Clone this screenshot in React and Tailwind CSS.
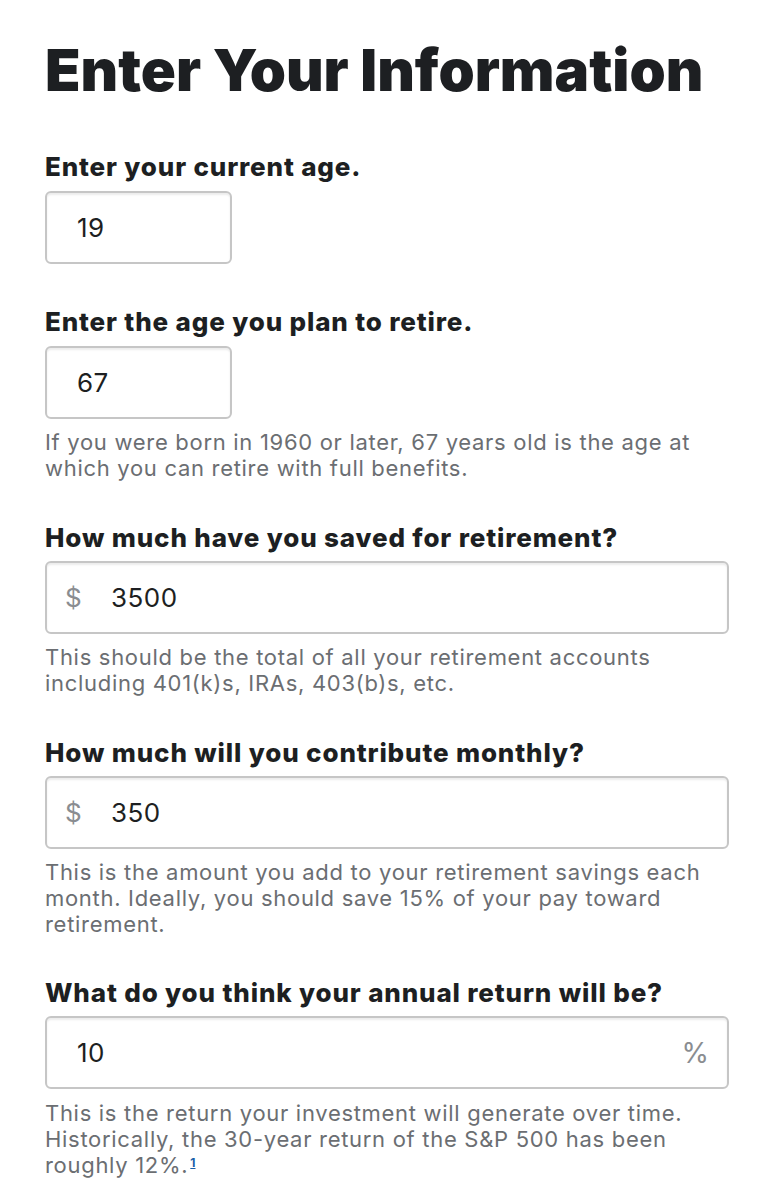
import React from "react";

const font = { fontFamily: "Inter, Lato, Arial, sans-serif" };

function Label({ children, className = "" }) {
  return (
    <div className={"text-[26px] leading-[32px] font-extrabold tracking-[0.85px] text-[#1d1f22] " + className}>
      {children}
    </div>
  );
}

function Help({ children, className = "" }) {
  return (
    <p className={"text-[22px] leading-[26px] tracking-[0.7px] text-[#6b6e72] " + className}>{children}</p>
  );
}

function Box({ className = "", children }) {
  return (
    <div
      className={
        "h-[73px] rounded-[6px] border-2 border-[#c6c6c6] bg-white flex items-center shadow-[inset_0_2px_2px_rgba(0,0,0,0.08)] " +
        className
      }
    >
      {children}
    </div>
  );
}

const val = "text-[26px] tracking-[0.5px] text-[#1d1f22]";
const affix = "text-[26px] text-[#8a8d91]";

export default function App() {
  return (
    <div className="bg-white w-[773px] min-h-[1200px] px-[45px] pt-[34px]" style={font}>
      <h1 className="text-[58px] leading-[72px] font-black text-[#1d1f22]">
        Enter Your Information
      </h1>

      <Label className="mt-[45px]">Enter your current age.</Label>
      <Box className="mt-[8px] w-[187px] pl-[30px]">
        <span className={val}>19</span>
      </Box>

      <Label className="mt-[42px]">Enter the age you plan to retire.</Label>
      <Box className="mt-[8px] w-[187px] pl-[30px]">
        <span className={val}>67</span>
      </Box>
      <Help className="mt-[10px]">
        If you were born in 1960 or later, 67 years old is the age at which you can retire with full benefits.
      </Help>

      <Label className="mt-[41px]">How much have you saved for retirement?</Label>
      <Box className="mt-[7px] w-[684px] pl-[18px]">
        <span className={affix + " w-[46px]"}>$</span>
        <span className={val}>3500</span>
      </Box>
      <Help className="mt-[10px] pr-[40px]">
        This should be the total of all your retirement accounts including 401(k)s, IRAs, 403(b)s, etc.
      </Help>

      <Label className="mt-[41px]">How much will you contribute monthly?</Label>
      <Box className="mt-[7px] w-[684px] pl-[18px]">
        <span className={affix + " w-[46px]"}>$</span>
        <span className={val}>350</span>
      </Box>
      <Help className="mt-[10px]">
        This is the amount you add to your retirement savings each month. Ideally, you should save 15% of your pay toward retirement.
      </Help>

      <Label className="mt-[40px]">What do you think your annual return will be?</Label>
      <Box className="mt-[7px] w-[684px] pl-[30px] pr-[18px] justify-between">
        <span className={val}>10</span>
        <span className={affix + " text-[28px]"}>%</span>
      </Box>
      <Help className="mt-[11px]">
        This is the return your investment will generate over time. Historically, the 30-year return of the S&amp;P 500 has been roughly 12%.
        <span className="inline-block align-top text-[12px] leading-[14px] mt-[4px] font-bold text-[#1a5fa8] underline ml-[2px] tracking-normal">1</span>
      </Help>
    </div>
  );
}
